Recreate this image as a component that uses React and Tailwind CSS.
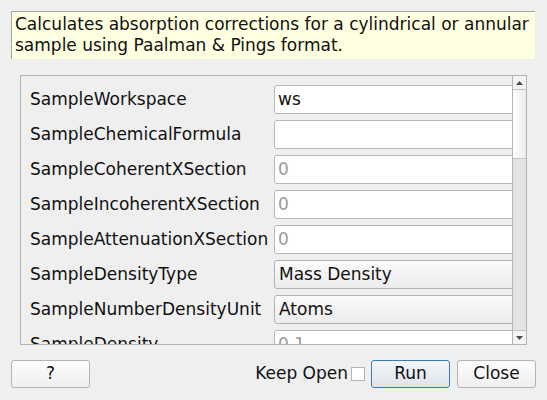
const ROWS = [
  { label: 'SampleWorkspace', value: 'ws', kind: 'text' },
  { label: 'SampleChemicalFormula', value: '', kind: 'text' },
  { label: 'SampleCoherentXSection', value: '0', kind: 'placeholder' },
  { label: 'SampleIncoherentXSection', value: '0', kind: 'placeholder' },
  { label: 'SampleAttenuationXSection', value: '0', kind: 'placeholder' },
  { label: 'SampleDensityType', value: 'Mass Density', kind: 'combo' },
  { label: 'SampleNumberDensityUnit', value: 'Atoms', kind: 'combo' },
  { label: 'SampleDensity', value: '0.1', kind: 'placeholder' },
];

function Field({ value, kind }) {
  if (kind === 'combo') {
    return (
      <div className="h-[29px] w-[260px] shrink-0 rounded-[3px] border border-[#b2b2b2] bg-gradient-to-b from-[#fbfbfb] to-[#ececec] pl-[4px] leading-[27px] text-[#111]">
        {value}
      </div>
    );
  }
  return (
    <div
      className={
        'h-[29px] w-[260px] shrink-0 rounded-[3px] border border-[#b8b8b8] bg-white pl-[3px] leading-[27px] ' +
        (kind === 'placeholder' ? 'text-[#9a9a9a]' : 'text-[#111]')
      }
    >
      {value}
    </div>
  );
}

export default function App() {
  return (
    <div
      className="flex h-[400px] w-[547px] flex-col bg-[#efefef] px-[11px] pt-[11px] text-[17px] text-[#111]"
      style={{ fontFamily: '"DejaVu Sans", sans-serif' }}
    >
      {/* description */}
      <div className="h-[48px] w-[524px] border-l border-t border-[#a4a4a4] bg-[#ffffe1] pl-[3px] pt-[2px] leading-[21px]">
        <div className="whitespace-nowrap">Calculates absorption corrections for a cylindrical or annular</div>
        <div>sample using Paalman &amp; Pings format.</div>
      </div>

      {/* property list */}
      <div className="ml-[9px] mt-[16px] flex h-[270px] w-[507px] border border-[#b4b4b4]">
        <div className="flex-1 overflow-hidden pl-[9px] pt-[9px]">
          <div className="flex flex-col gap-[6px]">
            {ROWS.map((row) => (
              <div key={row.label} className="flex h-[29px] items-center">
                <div className="w-[244px] shrink-0 whitespace-nowrap">{row.label}</div>
                <Field value={row.value} kind={row.kind} />
              </div>
            ))}
          </div>
        </div>
        {/* scrollbar */}
        <div className="flex w-[14px] flex-col border-l border-[#b4b4b4] bg-[#e3e3e3]">
          <div className="flex h-[14px] items-center justify-center border-b border-[#c4c4c4] bg-[#f4f4f4]">
            <svg width="7" height="4" viewBox="0 0 7 4">
              <path d="M0 4 L3.5 0 L7 4 Z" fill="#4a4a4a" />
            </svg>
          </div>
          <div className="h-[69px] border-b border-[#c4c4c4] bg-gradient-to-r from-white to-[#ececec]" />
          <div className="flex-1" />
          <div className="flex h-[14px] items-center justify-center border-t border-[#c4c4c4] bg-[#f4f4f4]">
            <svg width="7" height="4" viewBox="0 0 7 4">
              <path d="M0 0 L7 0 L3.5 4 Z" fill="#4a4a4a" />
            </svg>
          </div>
        </div>
      </div>

      {/* buttons */}
      <div className="mt-[15px] flex h-[28px] items-center">
        <div className="flex h-[28px] w-[79px] items-center justify-center rounded-[3px] border border-[#b4b4b4] bg-gradient-to-b from-[#fcfcfc] to-[#efefef]">
          ?
        </div>
        <div className="flex-1" />
        <span className="mr-[3px]">Keep Open</span>
        <div className="mr-[6px] h-[14px] w-[14px] border border-[#b4b4b4] bg-white" />
        <div className="flex h-[28px] w-[79px] items-center justify-center rounded-[3px] border border-[#3b7bb3] bg-gradient-to-b from-[#f3f6f9] to-[#dde4ea]">
          Run
        </div>
        <div className="ml-[7px] flex h-[28px] w-[79px] items-center justify-center rounded-[3px] border border-[#b4b4b4] bg-gradient-to-b from-[#fcfcfc] to-[#efefef]">
          Close
        </div>
      </div>
    </div>
  );
}
